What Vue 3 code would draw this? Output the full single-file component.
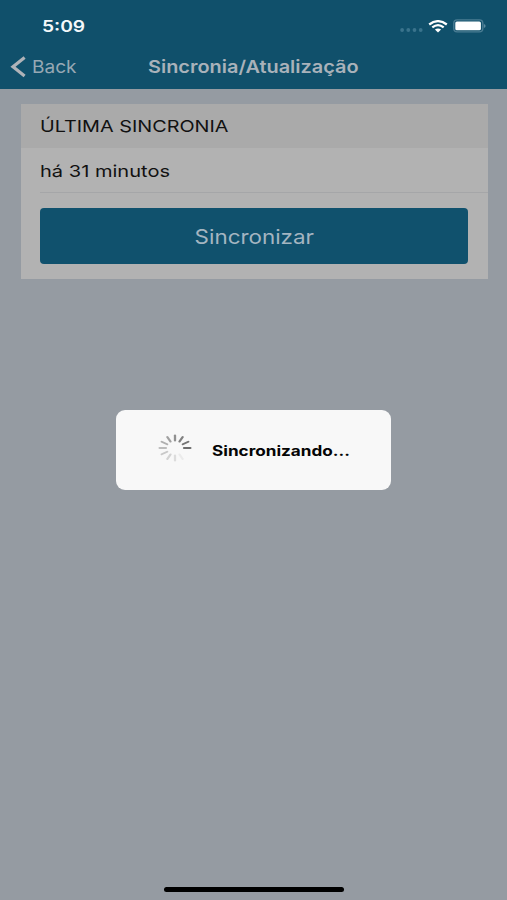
<script setup>
import { ref } from 'vue'

const ultimaSincronia = ref('há 31 minutos')
const sincronizando = ref(true)

// opacidade de cada traço do spinner, sentido horário a partir do topo
const tracos = [0.42, 0.48, 0.53, 0.56, 0, 0.05, 0.11, 0.15, 0.19, 0.24, 0.29, 0.35]
</script>

<template>
  <div class="screen">
    <header class="header">
      <div class="status-bar">
        <span class="time"><span class="wide">5:09</span></span>
        <div class="status-icons">
          <svg class="signal" width="23" height="4" viewBox="0 0 23 4">
            <circle v-for="n in 4" :key="n" :cx="n * 6.2 - 4.1" cy="2" r="1.9" />
          </svg>
          <svg class="wifi" width="20" height="13" viewBox="0 0 20 13">
            <path d="M1.2 4.5Q10 -2.2 18.8 4.5" />
            <path d="M4.3 7.4Q10 2.9 15.7 7.4" />
            <path class="dot" d="M6.9 9.6Q10 7.2 13.1 9.6L10 12.6Z" />
          </svg>
          <svg class="battery" width="33" height="14" viewBox="0 0 33 14">
            <rect class="case" x="0.8" y="0.9" width="29" height="12" rx="3.4" />
            <rect class="charge" x="2.3" y="2.5" width="25.6" height="8.8" rx="1.6" />
            <path class="tip" d="M30.9 4.9Q32.6 5.5 32.6 6.9T30.9 8.9Z" />
          </svg>
        </div>
      </div>
      <nav class="nav-bar">
        <button class="back">
          <svg width="16" height="22" viewBox="0 0 16 22">
            <path d="M14.6 1.6L3 10.8L14.6 20" />
          </svg>
          <span class="wide">Back</span>
        </button>
        <h1><span class="wide">Sincronia/Atualização</span></h1>
      </nav>
    </header>

    <main class="content">
      <section class="card">
        <h2><span class="wide">ÚLTIMA SINCRONIA</span></h2>
        <p class="last-sync"><span class="wide">{{ ultimaSincronia }}</span></p>
        <div class="actions">
          <button class="sync-button"><span class="wide">Sincronizar</span></button>
        </div>
      </section>
    </main>

    <div v-if="sincronizando" class="loading">
      <svg class="spinner" width="36" height="30" viewBox="-18 -15 36 30">
        <g transform="scale(1.22 1)">
          <line
            v-for="(opacidade, i) in tracos"
            :key="i"
            y1="-7.4"
            y2="-12.6"
            :transform="`rotate(${i * 30})`"
            :stroke-opacity="opacidade"
          />
        </g>
      </svg>
      <span class="loading-text"><span class="wide">Sincronizando...</span></span>
    </div>

    <div class="home-indicator"></div>
  </div>
</template>

<style>
body {
  margin: 0;
}
</style>

<style scoped>
.screen {
  position: relative;
  height: 900px;
  overflow: hidden;
  display: flex;
  flex-direction: column;
  background: #959ba2;
  color: #111;
  font-family: Inter, "Liberation Sans", sans-serif;
}

.wide {
  display: inline-block;
  white-space: nowrap;
  transform: scaleX(1.2);
  transform-origin: left center;
}

button {
  padding: 0;
  border: 0;
  background: none;
  font-family: inherit;
}

.header {
  height: 89px;
  background: #10506b;
}

.status-bar {
  height: 44px;
  box-sizing: border-box;
  padding: 8px 21px 0 42px;
  display: flex;
  align-items: center;
  justify-content: space-between;
}

.time {
  color: #f4f8fa;
  font-size: 16px;
  font-weight: 600;
}

.status-icons {
  display: flex;
  align-items: center;
}

.signal {
  margin: 8px 5px 0 0;
  fill: #3a738c;
}

.wifi {
  margin-right: 5px;
  fill: none;
  stroke: #fff;
  stroke-width: 2.3;
}

.wifi .dot {
  fill: #fff;
  stroke: none;
}

.case {
  fill: none;
  stroke: #4a7c93;
  stroke-width: 1.4;
}

.charge {
  fill: #fff;
}

.tip {
  fill: #5b899d;
}

.nav-bar {
  position: relative;
  height: 45px;
  display: flex;
  align-items: center;
  color: #a9b2ba;
}

.back {
  margin-left: 10px;
  display: flex;
  align-items: center;
  gap: 6px;
  color: #97a8b4;
  font-size: 17.5px;
}

.back .wide {
  transform: scaleX(1.09);
}

.back svg {
  fill: none;
  stroke: #b0b3b8;
  stroke-width: 3.2;
}

h1 {
  position: absolute;
  left: 148px;
  margin: 0;
  font-size: 17.5px;
  font-weight: 600;
}

h1 .wide {
  transform: scaleX(1.138);
}

.content {
  padding: 15px 19px 0 21px;
}

.card {
  height: 175px;
  background: #b2b2b2;
}

h2 {
  height: 44px;
  margin: 0;
  padding-left: 19px;
  background: #aaa;
  font-size: 16.5px;
  font-weight: 400;
  line-height: 45px;
}

.last-sync {
  height: 44px;
  margin: 0 0 0 19px;
  border-bottom: 1px solid #a5a6a8;
  font-size: 16.5px;
  line-height: 46px;
}

.last-sync .wide {
  transform: scaleX(1.215);
}

.actions {
  padding: 15px 20px 0 19px;
}

.sync-button {
  width: 100%;
  height: 56px;
  padding-top: 2px;
  border-radius: 4px;
  background: #10516d;
  color: #a4b5c1;
  font-size: 20px;
}

.sync-button .wide {
  transform: scaleX(1.12);
  transform-origin: center;
}

.loading {
  position: absolute;
  left: 116px;
  top: 410px;
  width: 275px;
  height: 80px;
  box-sizing: border-box;
  padding-left: 41px;
  display: flex;
  align-items: center;
  gap: 19px;
  border-radius: 9px;
  background: #f8f8f8;
}

.spinner {
  margin-top: -4px;
  stroke: #000;
  stroke-width: 1.9;
  stroke-linecap: round;
}

.loading-text {
  color: #050505;
  font-size: 14px;
  font-weight: 700;
}

.loading-text .wide {
  transform: scaleX(1.225);
}

.home-indicator {
  position: absolute;
  left: 164px;
  bottom: 8px;
  width: 180px;
  height: 5px;
  border-radius: 3px;
  background: #000;
}
</style>
